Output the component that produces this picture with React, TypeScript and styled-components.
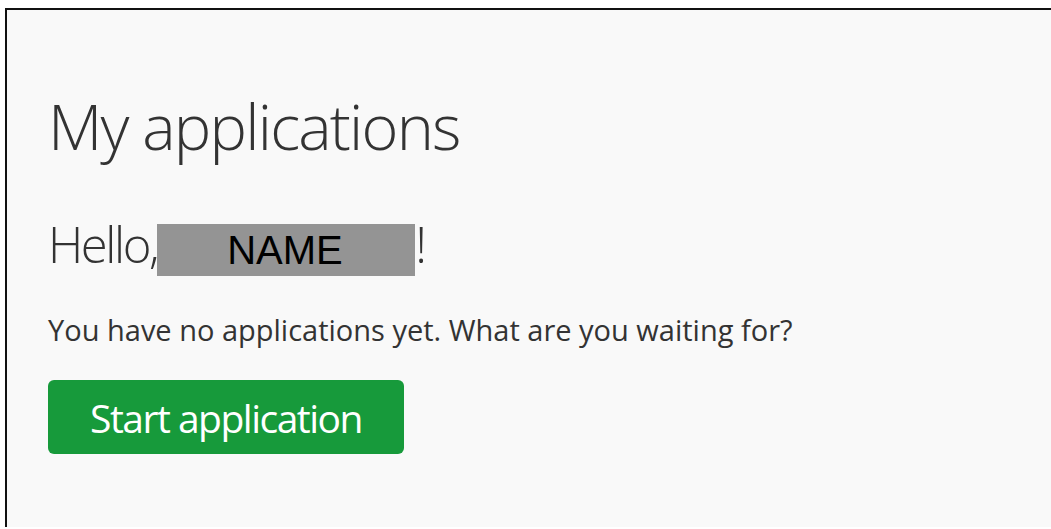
import styled, { createGlobalStyle } from "styled-components";

const GlobalStyle = createGlobalStyle`
	html, body {
		margin: 0;
		padding: 0;
		background: #ffffff;
	}
	body {
		font-family: "Open Sans", "Liberation Sans", sans-serif;
		color: #333333;
	}
`;

const Frame = styled.div`
	margin: 8px 0 0 5px;
	border-top: 2px solid #111111;
	border-left: 2px solid #111111;
	background: #f9f9f9;
	height: calc(100vh - 10px);
	box-sizing: border-box;
	padding: 80px 40px 0 41px;
	overflow: hidden;
`;

const Title = styled.h1`
	margin: 0;
	font-size: 63px;
	font-weight: 300;
	line-height: 72px;
	letter-spacing: -1.8px;
`;

const Greeting = styled.h2`
	margin: 54px 0 0;
	font-size: 49px;
	font-weight: 300;
	line-height: 56px;
	display: flex;
	align-items: flex-start;
	letter-spacing: -2.4px;
`;

const Redacted = styled.span`
	display: inline-flex;
	align-items: center;
	box-sizing: border-box;
	width: 258px;
	height: 52px;
	margin: 8px 0 0 0;
	padding-left: 70px;
	background: #949494;
	font-family: "Liberation Sans", Arial, sans-serif;
	font-size: 40px;
	font-weight: 400;
	letter-spacing: 0;
	color: #000000;
`;

const Bang = styled.span`
	margin-left: 0;
`;

const Lead = styled.p`
	margin: 34px 0 0;
	font-size: 29px;
	line-height: 40px;
`;

const StartButton = styled.button`
	margin-top: 30px;
	width: 356px;
	height: 74px;
	border: none;
	border-radius: 6px;
	background: #179a3b;
	color: #ffffff;
	font-family: "Open Sans", sans-serif;
	font-size: 39px;
	letter-spacing: -1.5px;
	cursor: pointer;
`;

const App = () => {
	return (
		<>
			<GlobalStyle />
			<Frame>
				<Title>My applications</Title>
				<Greeting>
					Hello,
					<Redacted>NAME</Redacted>
					<Bang>!</Bang>
				</Greeting>
				<Lead>You have no applications yet. What are you waiting for?</Lead>
				<StartButton>Start application</StartButton>
			</Frame>
		</>
	);
};

export default App;
